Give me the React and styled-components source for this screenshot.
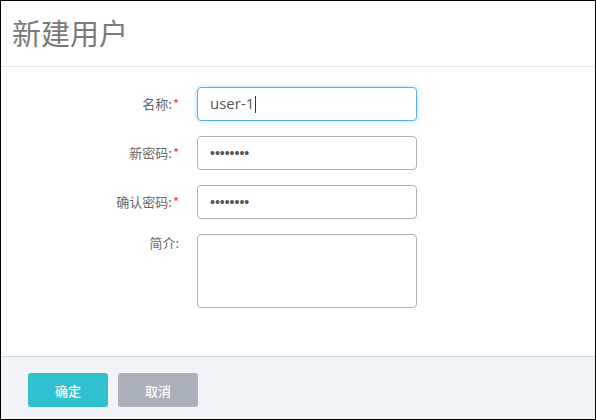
import React from "react";
import styled, { createGlobalStyle } from "styled-components";

const Global = createGlobalStyle`
  html, body { margin: 0; padding: 0; background: #fff; }
  * { box-sizing: border-box; }
`;

const Dialog = styled.div`
  width: 596px;
  height: 420px;
  border: 1px solid #000;
  display: flex;
  flex-direction: column;
  background: #fff;
  font-family: "Noto Sans CJK SC", "Noto Sans", sans-serif;
`;

const Header = styled.div`
  height: 66px;
  flex: none;
  border-bottom: 1px solid #e5e5e5;
  display: flex;
  align-items: center;
  padding-left: 11px;
`;

const Title = styled.h1`
  margin: 0;
  font-size: 29px;
  font-weight: 400;
  color: #7a7a7a;
  line-height: 1;
  padding-bottom: 2px;
`;

const Form = styled.div`
  flex: 1;
  display: flex;
  flex-direction: column;
  gap: 15px;
  padding-top: 20px;
`;

const Row = styled.div`
  display: flex;
  align-items: ${(p) => (p.$top ? "flex-start" : "center")};
`;

const Label = styled.div`
  width: 178px;
  margin-right: 18px;
  text-align: right;
  font-size: 13px;
  color: #666;
  line-height: 16px;
  padding-top: ${(p) => (p.$top ? "1px" : "0")};
`;

const Star = styled.span`
  color: #e8424b;
  margin-left: 1px;
`;

const Field = styled.div`
  width: 220px;
  height: ${(p) => (p.$tall ? "74px" : "34px")};
  border: 1px solid ${(p) => (p.$focus ? "#5aaeea" : "#aab2bd")};
  box-shadow: ${(p) => (p.$focus ? "0 0 4px rgba(90,174,234,0.55)" : "none")};
  border-radius: 4px;
  background: #fff;
  display: flex;
  align-items: center;
  padding-left: 12px;
  color: #555;
`;

const Value = styled.span`
  font-family: "Open Sans", "Noto Sans", sans-serif;
  font-size: 15px;
  line-height: 1;
  padding-bottom: 1px;
`;

const Caret = styled.span`
  display: inline-block;
  width: 1px;
  height: 17px;
  background: #333;
  margin-left: 1px;
`;

const Dots = styled.span`
  font-family: "Liberation Sans", sans-serif;
  font-size: 14px;
  color: #555;
  padding-bottom: 1px;
`;

const Footer = styled.div`
  height: 63px;
  flex: none;
  border-top: 1px solid #d3d5d9;
  background: #f0f3f8;
  display: flex;
  align-items: flex-start;
  gap: 10px;
  padding: 16px 0 0 27px;
`;

const Button = styled.button`
  width: 80px;
  height: 34px;
  border: none;
  border-radius: 3px;
  background: ${(p) => (p.$primary ? "#31c0cf" : "#aab0bb")};
  color: #fff;
  font-family: "Noto Sans CJK SC", sans-serif;
  font-size: 13px;
  font-weight: 500;
  padding: 0;
`;

export default function App() {
  return (
    <>
      <Global />
      <Dialog>
        <Header>
          <Title>新建用户</Title>
        </Header>
        <Form>
          <Row>
            <Label>名称:<Star>*</Star></Label>
            <Field $focus>
              <Value>user-1</Value>
              <Caret />
            </Field>
          </Row>
          <Row>
            <Label>新密码:<Star>*</Star></Label>
            <Field>
              <Dots>••••••••</Dots>
            </Field>
          </Row>
          <Row>
            <Label>确认密码:<Star>*</Star></Label>
            <Field>
              <Dots>••••••••</Dots>
            </Field>
          </Row>
          <Row $top>
            <Label $top>简介:</Label>
            <Field $tall />
          </Row>
        </Form>
        <Footer>
          <Button $primary>确定</Button>
          <Button>取消</Button>
        </Footer>
      </Dialog>
    </>
  );
}
